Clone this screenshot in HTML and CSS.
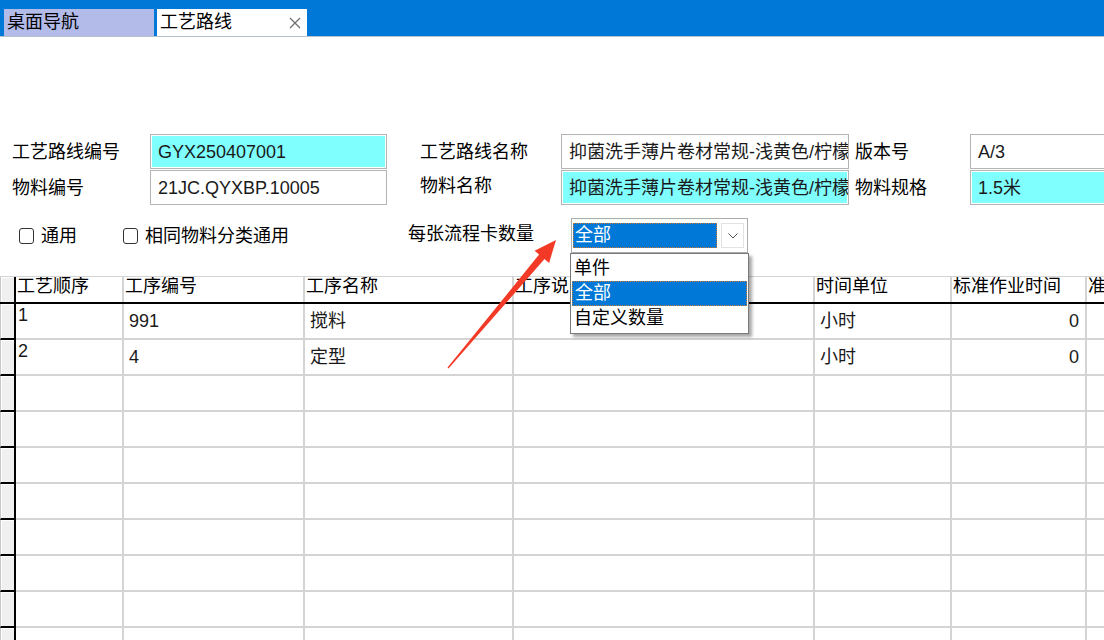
FILE: index.html
```html
<!DOCTYPE html>
<html lang="zh-CN">
<head>
    <meta charset="utf-8">
    <title>工艺路线</title>
    <link rel="stylesheet" href="styles.css">
</head>
<body>
<div class="tab-bar">
    <div class="tab tab-nav">桌面导航</div>
    <div class="tab tab-active">
        <span>工艺路线</span>
        <svg class="tab-close" viewBox="0 0 12 12">
            <path d="M1 1L11 11M11 1L1 11"/>
        </svg>
    </div>
</div>

<div class="form">
    <div class="form-row">
        <span class="label label-a">工艺路线编号</span>
        <div class="field field-a cyan">GYX250407001</div>
        <span class="label label-b">工艺路线名称</span>
        <div class="field field-b">抑菌洗手薄片卷材常规-浅黄色/柠檬</div>
        <span class="label label-c">版本号</span>
        <div class="field field-c">A/3</div>
    </div>
    <div class="form-row">
        <span class="label label-a">物料编号</span>
        <div class="field field-a">21JC.QYXBP.10005</div>
        <span class="label label-b label-up">物料名称</span>
        <div class="field field-b cyan">抑菌洗手薄片卷材常规-浅黄色/柠檬</div>
        <span class="label label-c">物料规格</span>
        <div class="field field-c cyan">1.5米</div>
    </div>
</div>

<div class="options">
    <label class="check check-a"><span class="check-box"></span>通用</label>
    <label class="check check-b"><span class="check-box"></span>相同物料分类通用</label>
    <span class="count-label">每张流程卡数量</span>
    <div class="combo">
        <div class="combo-value">全部</div>
        <div class="combo-btn">
            <svg viewBox="0 0 10 6"><path d="M0.5 0.5L5 5L9.5 0.5"/></svg>
        </div>
        <div class="combo-list">
            <div class="combo-item">单件</div>
            <div class="combo-item selected">全部</div>
            <div class="combo-item">自定义数量</div>
        </div>
    </div>
</div>

<div class="grid">
    <div class="grid-row grid-head">
        <div class="row-head"></div>
        <div class="cell">工艺顺序</div>
        <div class="cell">工序编号</div>
        <div class="cell">工序名称</div>
        <div class="cell">工序说明</div>
        <div class="cell">时间单位</div>
        <div class="cell">标准作业时间</div>
        <div class="cell">准备时间</div>
    </div>
    <div class="grid-row">
        <div class="row-head"></div>
        <div class="cell cell-seq">1</div>
        <div class="cell">991</div>
        <div class="cell">搅料</div>
        <div class="cell"></div>
        <div class="cell">小时</div>
        <div class="cell cell-num">0</div>
        <div class="cell"></div>
    </div>
    <div class="grid-row">
        <div class="row-head"></div>
        <div class="cell cell-seq">2</div>
        <div class="cell">4</div>
        <div class="cell">定型</div>
        <div class="cell"></div>
        <div class="cell">小时</div>
        <div class="cell cell-num">0</div>
        <div class="cell"></div>
    </div>
    <div class="grid-row"><div class="row-head"></div><div class="cell"></div><div class="cell"></div><div class="cell"></div><div class="cell"></div><div class="cell"></div><div class="cell"></div><div class="cell"></div></div>
    <div class="grid-row"><div class="row-head"></div><div class="cell"></div><div class="cell"></div><div class="cell"></div><div class="cell"></div><div class="cell"></div><div class="cell"></div><div class="cell"></div></div>
    <div class="grid-row"><div class="row-head"></div><div class="cell"></div><div class="cell"></div><div class="cell"></div><div class="cell"></div><div class="cell"></div><div class="cell"></div><div class="cell"></div></div>
    <div class="grid-row"><div class="row-head"></div><div class="cell"></div><div class="cell"></div><div class="cell"></div><div class="cell"></div><div class="cell"></div><div class="cell"></div><div class="cell"></div></div>
    <div class="grid-row"><div class="row-head"></div><div class="cell"></div><div class="cell"></div><div class="cell"></div><div class="cell"></div><div class="cell"></div><div class="cell"></div><div class="cell"></div></div>
    <div class="grid-row"><div class="row-head"></div><div class="cell"></div><div class="cell"></div><div class="cell"></div><div class="cell"></div><div class="cell"></div><div class="cell"></div><div class="cell"></div></div>
    <div class="grid-row"><div class="row-head"></div><div class="cell"></div><div class="cell"></div><div class="cell"></div><div class="cell"></div><div class="cell"></div><div class="cell"></div><div class="cell"></div></div>
    <div class="grid-row"><div class="row-head"></div><div class="cell"></div><div class="cell"></div><div class="cell"></div><div class="cell"></div><div class="cell"></div><div class="cell"></div><div class="cell"></div></div>
</div>

<!-- annotation arrow drawn over the screenshot -->
<svg class="arrow" viewBox="0 0 1104 640">
    <polygon points="556,240 549.1,262.9 544.5,259.1 448.5,368.4 447.5,367.6 539.1,254.6 534.6,250.7"/>
</svg>
</body>
</html>
```

FILE: styles.css
```css
:root {
    --blue: #0078d7;
    --tab-nav: #b3bbe9;
    --cyan: #80ffff;
    --field-border: #b4b4b4;
    --grid-line: #d4d4d4;
    --row-head: #f0f0f0;
    --arrow: #f23a26;
}

* {
    box-sizing: border-box;
}

body {
    margin: 0;
    width: 1104px;
    height: 640px;
    overflow: hidden;
    position: relative;
    background: #fff;
    color: #000;
    font-family: "Liberation Sans", "Noto Sans CJK SC", sans-serif;
    font-size: 18px;
    line-height: 20px;
}

/* tabs */
.tab-bar {
    height: 37px;
    background: var(--blue);
    border-bottom: 1px solid #b9c3cf;
    display: flex;
    align-items: flex-end;
    gap: 3px;
    padding-left: 4px;
}

.tab {
    width: 150px;
    height: 27px;
    line-height: 27px;
    padding-left: 3px;
}

.tab-nav {
    background: var(--tab-nav);
}

.tab-active {
    background: #fff;
    display: flex;
    align-items: center;
    justify-content: space-between;
    padding-right: 6px;
}

.tab-close {
    width: 12px;
    height: 12px;
    stroke: #707070;
    stroke-width: 1.3;
    fill: none;
}

/* header form */
.form {
    margin-top: 97px;
    padding-left: 12px;
    display: flex;
    flex-direction: column;
    gap: 1px;
    overflow: hidden;
}

.form-row {
    display: flex;
    align-items: center;
    height: 35px;
}

.form-row > * {
    flex-shrink: 0;
}

.label {
    white-space: nowrap;
}

.label-a {
    width: 138px;
}

.label-b {
    width: 141px;
    margin-left: 33px;
}

.label-up {
    margin-top: -4px;
}

.label-c {
    width: 115px;
    margin-left: 6px;
}

.field {
    height: 100%;
    border: 1px solid var(--field-border);
    padding-left: 7px;
    display: flex;
    align-items: center;
    white-space: nowrap;
    overflow: hidden;
    color: #1a1a1a;
    background: #fff;
}

.field.cyan {
    background: var(--cyan);
    box-shadow: inset 0 0 0 1px #fff;
}

.field-a {
    width: 237px;
}

.field-b {
    width: 288px;
}

.field-c {
    width: 200px;
}

/* options line */
.options {
    margin-top: 13px;
    height: 35px;
    padding-left: 19px;
    display: flex;
    align-items: center;
}

.options > * {
    flex-shrink: 0;
}

.check {
    display: flex;
    align-items: center;
    gap: 7px;
}

.check-a {
    width: 104px;
}

.check-b {
    width: 285px;
}

.check-box {
    flex-shrink: 0;
    width: 15px;
    height: 16px;
    border: 1px solid #333;
    border-radius: 3px;
    background: #fff;
}

.count-label {
    width: 163px;
    margin-top: -4px;
}

.combo {
    position: relative;
    width: 177px;
    height: 35px;
    border: 1px solid #acacac;
    padding: 4px 3px 4px 1px;
    display: flex;
    gap: 4px;
    background: #fff;
}

.combo-value {
    width: 144px;
    background: var(--blue);
    color: #fff;
    border: 1px dotted #c87a30;
    padding-left: 1px;
    line-height: 23px;
}

.combo-btn {
    flex: 1;
    border: 1px solid #e3e3e3;
    display: flex;
    align-items: center;
    justify-content: center;
}

.combo-btn svg {
    width: 10px;
    height: 6px;
    fill: none;
    stroke: #555;
    stroke-width: 1;
}

.combo-list {
    position: absolute;
    left: -2px;
    top: 34px;
    width: 179px;
    border: 1px solid #7a7a7a;
    background: #fff;
    padding: 2px 1px;
    box-shadow: 3px 3px 3px rgba(0, 0, 0, 0.35);
    z-index: 2;
}

.combo-item {
    height: 25px;
    line-height: 25px;
    padding-left: 2px;
}

.combo-item.selected {
    background: var(--blue);
    color: #fff;
    border: 1px dotted #c87a30;
    line-height: 23px;
}

/* grid */
.grid {
    margin-top: 23px;
    border-top: 1px solid var(--grid-line);
    width: 1104px;
    overflow: hidden;
}

.grid-row {
    display: grid;
    grid-template-columns: 16px 108px 181px 209px 301px 137px 135px 163px;
    width: 1250px;
    height: 36px;
}

.grid-head {
    height: 27px;
    border-bottom: 2px solid #000;
}

.cell {
    border-right: 2px solid var(--grid-line);
    border-bottom: 2px solid var(--grid-line);
    padding: 0 5px;
    display: flex;
    align-items: center;
    white-space: nowrap;
    overflow: hidden;
    color: #1a1a1a;
}

.grid-head .cell {
    border-bottom: none;
    padding: 0 0 0 1px;
    align-items: flex-start;
    line-height: 18px;
    color: #000;
}

.cell-seq {
    align-items: flex-start;
    padding: 3px 2px 0;
    line-height: 16px;
}

.cell-num {
    justify-content: flex-end;
    padding-right: 6px;
}

.row-head {
    background: var(--row-head);
    border-right: 2px solid #000;
    border-bottom: 2px solid #000;
    border-left: 1px solid #c8c8c8;
    box-shadow: inset 1px 1px 0 #fff;
}

.grid-head .row-head {
    border-bottom: none;
}

.arrow {
    position: absolute;
    left: 0;
    top: 0;
    width: 1104px;
    height: 640px;
    pointer-events: none;
}

.arrow polygon {
    fill: var(--arrow);
}
```
